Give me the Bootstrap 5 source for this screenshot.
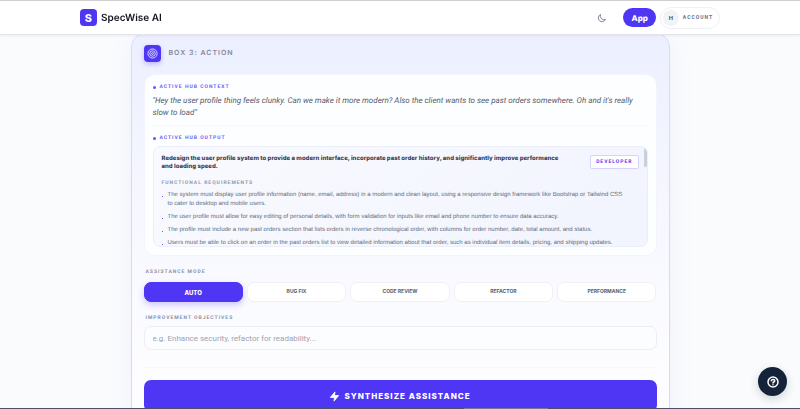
<!DOCTYPE html>
<html lang="en">
<head>
<meta charset="utf-8">
<meta name="viewport" content="width=device-width, initial-scale=1">
<title>SpecWise AI</title>
<link href="https://cdn.jsdelivr.net/npm/bootstrap@5.3.0/dist/css/bootstrap.min.css" rel="stylesheet">
<style>
:root { --brand: #4f36f5; --muted: #8b90a5; --label-font: Roboto, "Liberation Sans", sans-serif; }
body { font-family: Inter, "Liberation Sans", sans-serif; font-size: 8px; line-height: 12px; color: #5a6072; background: #fafbfd; text-rendering: geometricPrecision; }
.topbar { height: 35px; background: #fff; border-top: 1px solid #cfcfcf; border-bottom: 1px solid #e2e4ea; box-shadow: 0 1px 2px #10204010; }
.shell { max-width: 640px; }
.logo-tile { width: 17px; height: 17px; border-radius: 4px; background: var(--brand); color: #fff; font-size: 11px; font-weight: 800; }
.brand-name { font-size: 10px; font-weight: 600; color: #14171f; }
.icon-btn { width: 10px; height: 10px; color: #687086; }
.pill-app { height: 19px; padding: 0 8px; font-size: 8px; font-weight: 800; color: #fff; background: var(--brand); }
.pill-account { height: 22px; padding: 0 6px 0 2px; border: 1px solid #eef0f5; background: #fff; color: #66708a; font-family: var(--label-font); font-size: 5px; font-weight: 700; letter-spacing: 1px; }
.avatar { width: 16px; height: 16px; background: #f1f3f7; color: #4a5265; font-size: 6px; letter-spacing: 0; }
.workspace { padding-top: 33px; }
.action-box { max-width: 539px; padding: 11px 12px 24px; border: 1px solid #d9d9fc; border-radius: 14px; background: linear-gradient(180deg, #eceffe 0, #f7f8ff 190px, #fdfdff 340px); box-shadow: 0 4px 24px #6f7dff14; }
.step-tile { width: 17px; height: 17px; border-radius: 4px; background: var(--brand); box-shadow: 0 2px 5px #4f36f550; }
.step-title { font-size: 7px; font-weight: 600; color: #84899c; letter-spacing: 1px; }
.hub { margin: 12px 0 0; padding: 8px; border: 1px solid #f3f4fd; border-radius: 11px; background: #fdfeff; }
.hub-label { font-family: var(--label-font); font-size: 5px; line-height: 8px; font-weight: 700; color: #6c5cf6; letter-spacing: 1px; }
.hub-label::before { content: ""; width: 3px; height: 3px; border-radius: 50%; background: #6557f2; }
.quote { margin: 4px 0 0; padding-bottom: 6px; border-bottom: 1px solid #f7f8fb; font-family: var(--label-font); font-style: italic; font-size: 8px; line-height: 12px; color: #555b69; }
.output { height: 101px; margin-top: 4px; padding: 8px; border: 1px solid #eceefa; border-radius: 7px; background: linear-gradient(135deg, #f9faff, #f2f4fe); }
.scroll-thumb { position: absolute; top: 1px; right: 0; width: 3px; height: 19px; border-radius: 2px; background: #c9d0dd; }
.summary { font-size: 6px; line-height: 8px; font-weight: 800; color: #3b4252; }
.role-tag { height: 14px; padding: 0 5px; border: 1px solid #d5d3fb; border-radius: 2px; background: #fff; color: var(--brand); font-family: var(--label-font); font-size: 5px; font-weight: 700; letter-spacing: 1px; }
.req-title { margin: 8px 0 4px; font-family: var(--label-font); font-size: 5px; line-height: 8px; font-weight: 700; color: #8b98ae; letter-spacing: 1px; }
.reqs { padding-left: 6px; font-family: "Liberation Sans", sans-serif; font-size: 6px; line-height: 9px; color: #626b7d; }
.reqs li { margin-bottom: 4px; position: relative; }
.reqs li::before { content: ""; position: absolute; left: -6px; top: 5px; width: 1px; height: 1px; background: #6557f2; }
.field-label { padding-left: 2px; font-family: var(--label-font); font-size: 5px; line-height: 8px; font-weight: 700; color: var(--muted); letter-spacing: 1px; }
.field-title { margin-top: 12px; }
.modes { margin: 6px -2px 0; }
.mode-btn { height: 20px; border: 1px solid #eff1f8; border-radius: 7px; background: #fff; color: #565e70; font-size: 5px; font-weight: 700; }
.mode-btn.active { background: var(--brand); border-color: var(--brand); color: #fff; font-size: 6px; font-weight: 800; box-shadow: 0 3px 6px #4f36f540; }
.goal-input { height: 24px; padding: 0 8px; border: 1px solid #eceef5; border-radius: 7px; background: #fcfdff; font-family: var(--label-font); font-size: 8px; }
.goal-input::placeholder { color: #9ca1af; opacity: 1; }
.rule { margin: 17px 0 12px; border-top: 1px solid #f5f6fb; }
.go-btn { height: 32px; border-radius: 7px; background: var(--brand); color: #fff; font-size: 8px; font-weight: 800; letter-spacing: 1px; }
.help-btn { position: fixed; right: 13px; bottom: 13px; z-index: 1040; width: 29px; height: 29px; background: #15233a; box-shadow: 0 3px 10px #15233a30; }
.edge { height: 1px; background: #514f68; z-index: 1050; }
.edge-grip { width: 84px; background: #77758c; margin-left: 58%; }
</style>
</head>
<body class="vh-100 overflow-hidden">
<header class="topbar fixed-top">
  <div class="shell container-fluid h-100 p-0 d-flex align-items-center justify-content-between">
    <a href="#" class="d-flex align-items-center gap-1 text-decoration-none">
      <span class="logo-tile d-flex align-items-center justify-content-center">S</span>
      <span class="brand-name">SpecWise AI</span>
    </a>
    <nav class="d-flex align-items-center">
      <button type="button" class="icon-btn btn p-0 border-0 d-flex me-3" aria-label="Dark mode">
        <svg width="10" height="10" viewBox="0 0 24 24" fill="none" stroke="currentColor" stroke-width="2" stroke-linejoin="round"><path d="M20.4 15.4A9 9 0 0 1 8.6 3.6 9 9 0 1 0 20.4 15.4Z"/></svg>
      </button>
      <a href="#" class="pill-app rounded-pill d-flex align-items-center text-decoration-none me-1">App</a>
      <button type="button" class="pill-account btn rounded-pill d-flex align-items-center gap-1">
        <span class="avatar rounded-circle d-flex align-items-center justify-content-center">H</span>ACCOUNT
      </button>
    </nav>
  </div>
</header>
<main class="workspace">
  <section class="action-box container-fluid">
    <div class="d-flex align-items-center gap-2">
      <span class="step-tile d-flex align-items-center justify-content-center">
        <svg width="11" height="11" viewBox="0 0 24 24" fill="none" stroke="#e6e2ff" stroke-width="2"><circle cx="12" cy="12" r="10"/><circle cx="12" cy="12" r="6"/><circle cx="12" cy="12" r="2"/></svg>
      </span>
      <h1 class="step-title m-0">BOX 3: ACTION</h1>
    </div>
    <div class="hub">
      <div class="hub-label d-flex align-items-center gap-1">ACTIVE HUB CONTEXT</div>
      <p class="quote">"Hey the user profile thing feels clunky. Can we make it more modern? Also the client wants to see past orders somewhere. Oh and it's really slow to load"</p>
      <div class="hub-label d-flex align-items-center gap-1 mt-2">ACTIVE HUB OUTPUT</div>
      <div class="output position-relative overflow-hidden">
        <div class="d-flex justify-content-between align-items-start gap-3">
          <div class="summary">Redesign the user profile system to provide a modern interface, incorporate past order history, and significantly improve performance<br>and loading speed.</div>
          <span class="role-tag d-flex align-items-center flex-shrink-0">DEVELOPER</span>
        </div>
        <h2 class="req-title">FUNCTIONAL REQUIREMENTS</h2>
        <ul class="reqs list-unstyled m-0">
          <li>The system must display user profile information (name, email, address) in a modern and clean layout, using a responsive design framework like Bootstrap or Tailwind CSS<br>to cater to desktop and mobile users.</li>
          <li>The user profile must allow for easy editing of personal details, with form validation for inputs like email and phone number to ensure data accuracy.</li>
          <li>The profile must include a new past orders section that lists orders in reverse chronological order, with columns for order number, date, total amount, and status.</li>
          <li>Users must be able to click on an order in the past orders list to view detailed information about that order, such as individual item details, pricing, and shipping updates.</li>
        </ul>
        <span class="scroll-thumb"></span>
      </div>
    </div>
    <div class="field-label field-title" id="mode-label">ASSISTANCE MODE</div>
    <div class="modes row row-cols-5 gx-1" role="group" aria-labelledby="mode-label">
      <div class="col"><button type="button" class="mode-btn active btn w-100 p-0">AUTO</button></div>
      <div class="col"><button type="button" class="mode-btn btn w-100 p-0">BUG FIX</button></div>
      <div class="col"><button type="button" class="mode-btn btn w-100 p-0">CODE REVIEW</button></div>
      <div class="col"><button type="button" class="mode-btn btn w-100 p-0">REFACTOR</button></div>
      <div class="col"><button type="button" class="mode-btn btn w-100 p-0">PERFORMANCE</button></div>
    </div>
    <label class="field-label field-title d-block" for="goals">IMPROVEMENT OBJECTIVES</label>
    <input id="goals" type="text" class="goal-input form-control mt-1" placeholder="e.g. Enhance security, refactor for readability...">
    <div class="rule"></div>
    <button type="button" class="go-btn btn w-100 p-0 border-0 d-flex align-items-center justify-content-center gap-1">
      <svg width="11" height="11" viewBox="0 0 24 24" fill="currentColor" stroke="currentColor" stroke-width="2" stroke-linejoin="round"><path d="M13 2 3 14h9l-1 8 10-12h-9l1-8Z"/></svg>
      SYNTHESIZE ASSISTANCE
    </button>
  </section>
</main>
<button type="button" class="help-btn btn rounded-circle border-0 p-0 d-flex align-items-center justify-content-center" aria-label="Help">
  <svg width="12" height="12" viewBox="0 0 24 24" fill="none" stroke="#fff" stroke-width="3" stroke-linecap="round" stroke-linejoin="round"><circle cx="12" cy="12" r="10"/><path d="M8.5 9.500C9 6 15.500 6 15.500 9.700 15.500 12 12 12 12 14M12 17.500v.1"/></svg>
</button>
<div class="edge fixed-bottom"><div class="edge-grip h-100"></div></div>
<script src="https://cdn.jsdelivr.net/npm/bootstrap@5.3.0/dist/js/bootstrap.bundle.min.js"></script>
</body>
</html>
